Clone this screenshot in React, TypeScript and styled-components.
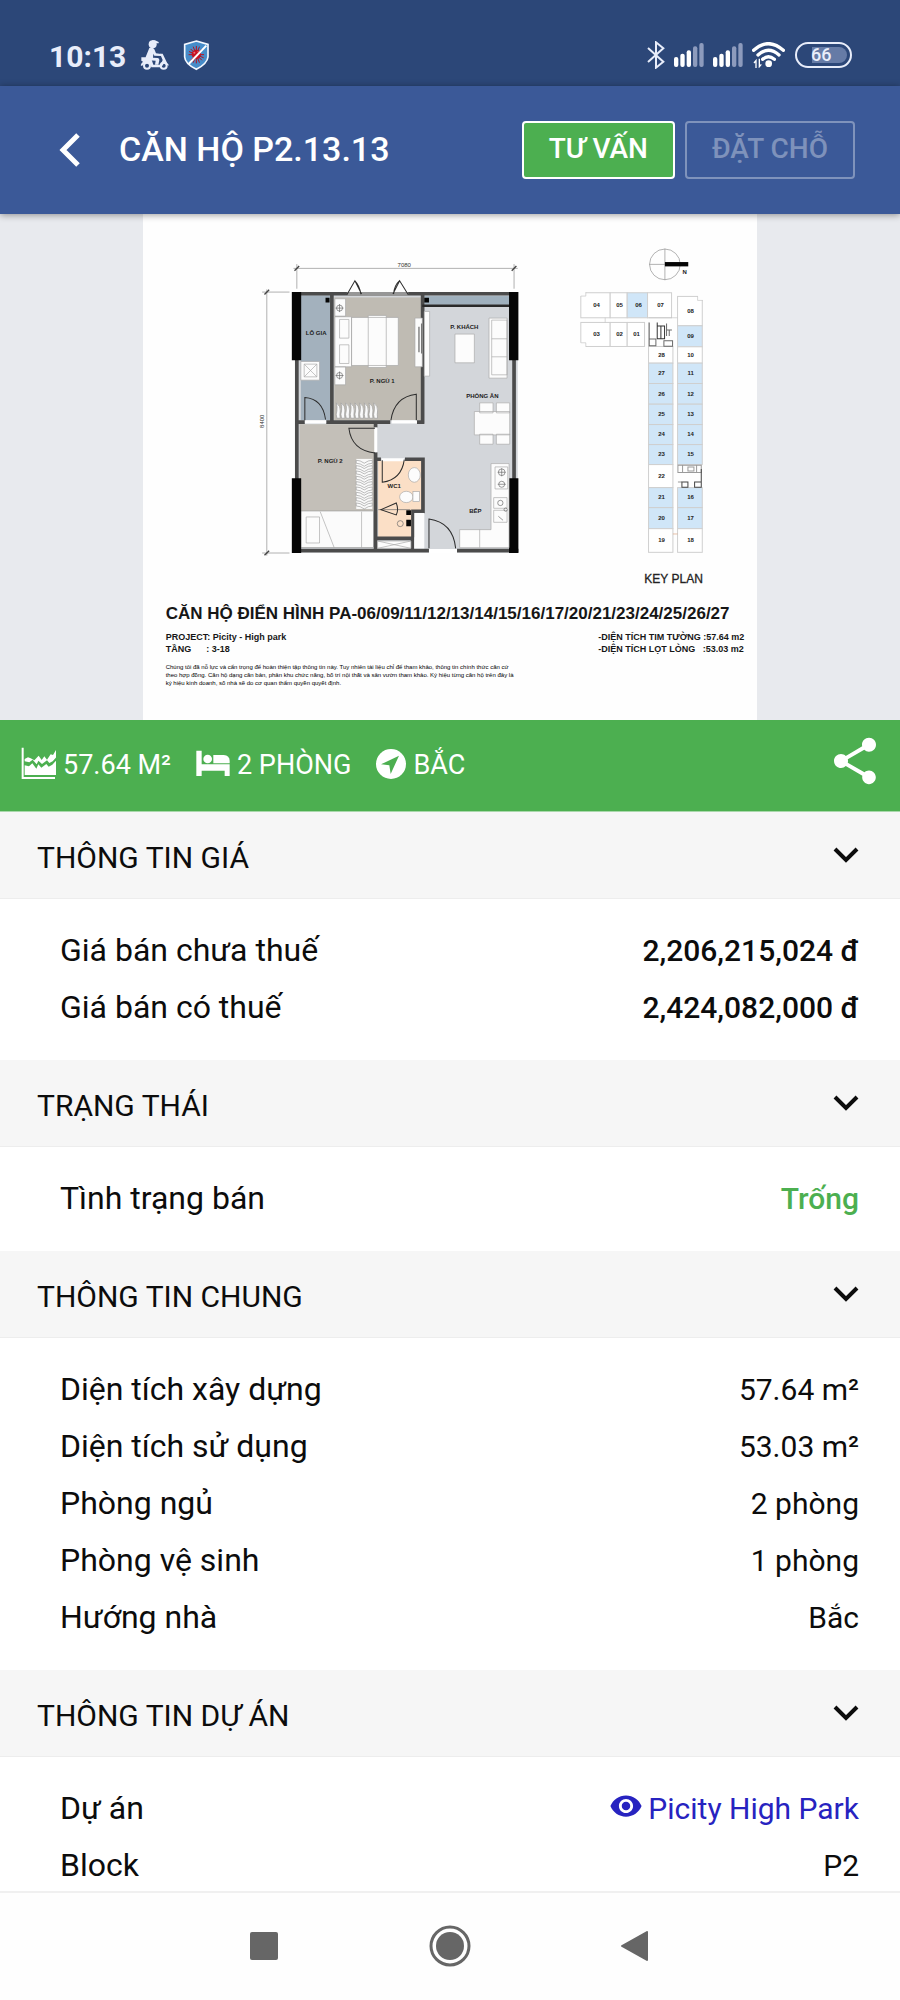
import React, { useState } from "react";
import styled, { createGlobalStyle, css } from "styled-components";
import { MdShare, MdVisibility } from "react-icons/md";

const GlobalStyle = createGlobalStyle`
  * { box-sizing: border-box; }
  body { margin: 0; background: #fff; color: #0c0c0c; font-family: Roboto, "Liberation Sans", sans-serif; }
  button { font-family: inherit; margin: 0; padding: 0; border: 0; background: none; color: inherit; cursor: pointer; }
  svg { display: block; }
`;

const App = styled.div`
  display: flex;
  flex-direction: column;
  height: 100vh;
`;

const StatusBar = styled.div`
  flex: none;
  display: flex;
  align-items: center;
  justify-content: space-between;
  height: 86px;
  padding: 24px 48px 0 49px;
  background: #2c4778;
  color: #e8edfa;
`;

const StatusGroup = styled.div<{ $gap: number }>`
  display: flex;
  align-items: center;
  gap: ${(p) => p.$gap}px;
`;

const Clock = styled.time`
  padding-top: 3px;
  font-size: 30px;
  font-weight: 700;
  line-height: 36px;
`;

const Battery = styled.div`
  display: flex;
  align-items: center;
  padding: 3px;
  width: 57px;
  height: 26px;
  border: 2px solid #e8edfa;
  border-radius: 13px;
`;

const BatteryLevel = styled.span`
  width: 100%;
  padding-left: 11px;
  border-radius: 8px;
  background: linear-gradient(90deg, transparent 12px, #667ba6 12px);
  font-size: 18px;
  font-weight: 500;
  line-height: 16px;
`;

const Header = styled.header`
  flex: none;
  position: relative;
  z-index: 1;
  display: flex;
  align-items: center;
  height: 128px;
  padding: 0 45px 0 49px;
  background: #3b5998;
  color: #fff;
  box-shadow: 0 1px 7px rgba(0, 0, 0, 0.4);
`;

const BackButton = styled.button`
  display: flex;
  align-items: center;
  justify-content: center;
  width: 42px;
  height: 48px;
`;

const Title = styled.h1`
  flex: 1;
  margin: 0 0 0 28px;
  padding-bottom: 2px;
  font-size: 34px;
  font-weight: 500;
  line-height: 40px;
  white-space: nowrap;
`;

const Actions = styled.div`
  display: flex;
  gap: 10px;
`;

const ActionButton = styled.button<{ $primary?: boolean }>`
  height: 58px;
  padding: 0 25px 4px;
  border: 2px solid rgba(255, 255, 255, 0.35);
  border-radius: 4px;
  color: rgba(255, 255, 255, 0.35);
  font-size: 28px;
  font-weight: 500;
  white-space: nowrap;
  ${(p) => p.$primary && css`
    background: #4caf50;
    border-color: #fff;
    color: #fff;
  `}
`;

const Content = styled.main`
  flex: 1;
  min-height: 0;
  overflow-y: auto;
  scrollbar-width: none;
`;

const Gallery = styled.div`
  display: flex;
  justify-content: center;
  background: #e8eaee;
`;

const Sheet = styled.figure`
  margin: 0;
  width: 68.3%;
  background: #fefefe;
  color: #161616;
  font-family: "Liberation Sans", Arial, sans-serif;
`;

const Drawing = styled.svg`
  width: 100%;
  height: auto;
`;

const Caption = styled.figcaption`
  padding: 0 13px 33px 23px;
`;

const SheetTitle = styled.div`
  font-size: 17px;
  font-weight: 700;
  line-height: 20px;
  white-space: nowrap;
`;

const SheetFacts = styled.div`
  display: flex;
  justify-content: space-between;
  margin-top: 7px;
  font-size: 9px;
  font-weight: 700;
  line-height: 12px;
  white-space: pre;
`;

const SheetNote = styled.p`
  margin: 8px 0 0;
  color: #000;
  font-size: 6px;
  line-height: 8px;
  white-space: pre;
`;

const Summary = styled.div`
  display: flex;
  align-items: flex-start;
  height: 92px;
  padding: 0 17px 0 21px;
  background: #4caf50;
  border-bottom: 1px solid #a9d8ab;
  color: #fff;
`;

const Facts = styled.div`
  flex: 1;
  display: flex;
  gap: 25px;
  padding-top: 27px;
`;

const Fact = styled.span`
  display: flex;
  gap: 7px;
  font-size: 27px;
  line-height: 36px;
  white-space: nowrap;
`;

const ShareButton = styled.button`
  margin-top: 13px;
`;

const SectionHead = styled.h2`
  margin: 0;
  border-bottom: 1px solid #ededed;
  background: #f6f6f6;
  font-size: 30px;
  font-weight: 400;
`;

const SectionToggle = styled.button`
  display: flex;
  align-items: center;
  justify-content: space-between;
  width: 100%;
  height: 86px;
  padding: 0 40px 0 37px;
  font-size: inherit;
  text-align: left;
`;

const SectionName = styled.span`
  padding-top: 6px;
  line-height: 36px;
`;

const Rows = styled.dl`
  margin: 0;
  padding: 23px 41px 24px 60px;
`;

const Row = styled.div`
  display: flex;
  align-items: baseline;
  justify-content: space-between;
  height: 57px;
  line-height: 57px;
`;

const Label = styled.dt`
  font-size: 32px;
`;

const Value = styled.dd<{ $tone?: Tone }>`
  margin: 0;
  font-size: 30px;
  font-weight: ${(p) => (p.$tone === "price" || p.$tone === "free" ? 500 : 400)};
  color: ${(p) => (p.$tone === "free" ? "#4caf50" : "inherit")};
`;

const ProjectLink = styled.a`
  color: #2723c0;
  text-decoration: none;

  svg {
    display: inline-block;
    margin-right: 5px;
    vertical-align: -4px;
  }
`;

const NavBar = styled.nav`
  flex: none;
  display: flex;
  justify-content: center;
  align-items: center;
  gap: 126px;
  height: 109px;
  padding-bottom: 1px;
  border-top: 2px solid #f0f0f0;
  background: #fefefe;
  color: #666;
`;

const NavButton = styled.button`
  display: flex;
  align-items: center;
  justify-content: center;
  width: 60px;
  height: 60px;
`;

type Tone = "price" | "free" | "link";
type Item = { label: string; value: string; tone?: Tone };

const sections: { name: string; items: Item[] }[] = [
  {
    name: "THÔNG TIN GIÁ",
    items: [
      { label: "Giá bán chưa thuế", value: "2,206,215,024 đ", tone: "price" },
      { label: "Giá bán có thuế", value: "2,424,082,000 đ", tone: "price" },
    ],
  },
  { name: "TRẠNG THÁI", items: [{ label: "Tình trạng bán", value: "Trống", tone: "free" }] },
  {
    name: "THÔNG TIN CHUNG",
    items: [
      { label: "Diện tích xây dựng", value: "57.64 m²" },
      { label: "Diện tích sử dụng", value: "53.03 m²" },
      { label: "Phòng ngủ", value: "2 phòng" },
      { label: "Phòng vệ sinh", value: "1 phòng" },
      { label: "Hướng nhà", value: "Bắc" },
    ],
  },
  {
    name: "THÔNG TIN DỰ ÁN",
    items: [
      { label: "Dự án", value: "Picity High Park", tone: "link" },
      { label: "Block", value: "P2" },
    ],
  },
];

const ScooterIcon = () => (
  <svg width="29" height="30" viewBox="0 0 87 90" fill="currentColor" aria-hidden="true">
    <circle cx="38" cy="13" r="12" />
    <path d="M36 1h9l11 5v4H40z" />
    <path d="M28 24q10-4 15 4l5 12 16 2-1 6-20-1-3-6-1 12 14 1q6 1 5 7l-3 13H45l2-12-23-1q-9-1-7-10z" />
    <path d="M4 52h28l4 10 4 12h22l6-14-8-19h8l13 27 7 9-7-2-9-5-8 12H34q-2-13-14-12-10 0-14 8l-4-2q2-8 7-11l-5-3z" />
    <g fill="none" stroke="currentColor" strokeWidth="6">
      <circle cx="21" cy="77" r="9" />
      <circle cx="71" cy="77" r="9" />
    </g>
  </svg>
);

const ShieldIcon = () => (
  <svg width="27" height="31" viewBox="0 0 81 93" aria-hidden="true">
    <path d="M40 3l35 10v38q-2 20-35 37Q6 71 5 51V13z" fill="#468cc9" stroke="#f4f8ff" strokeWidth="5" />
    <g stroke="#b3121f" strokeWidth="3" strokeLinecap="round">
      <path d="M40 19v50M18 44h44M24 28l32 32M56 28L24 60M31 21l18 46M19 35l42 18M49 21L31 67" />
    </g>
    <circle cx="40" cy="43" r="14" fill="#c41323" />
    <circle cx="34" cy="38" r="3" fill="#eb6a73" />
    <circle cx="45" cy="35" r="2" fill="#eb6a73" />
    <path d="M17 72l53-55" stroke="#fff" strokeWidth="6" />
  </svg>
);

const BluetoothIcon = () => (
  <svg width="18" height="28" viewBox="0 0 54 84" fill="none" stroke="currentColor" strokeWidth="6" aria-hidden="true">
    <path d="M3 21l46 41-22 18V4l22 18L3 63" />
  </svg>
);

const SignalIcon = () => (
  <svg width="30" height="24" viewBox="0 0 90 72" aria-hidden="true">
    {[42, 32, 22, 10, 0].map((top, i) => (
      <rect key={top} x={i * 19} y={top} width="13" height={72 - top} rx="6" fill={i < 3 ? "#fff" : "#8d9bbd"} />
    ))}
  </svg>
);

const WifiIcon = () => (
  <svg width="34" height="26" viewBox="0 0 102 78" fill="none" stroke="#fff" aria-hidden="true">
    <g strokeWidth="10" strokeLinecap="round">
      <path d="M5 25q44-40 89 0" />
      <path d="M18 39q31-28 63 0" />
      <path d="M32 52q17-15 35 0" />
    </g>
    <circle cx="50" cy="65" r="10" fill="#fff" stroke="none" />
    <path d="M12 78V56l-6 7M22 50v24l6-7" strokeWidth="4" />
  </svg>
);

const AreaChartIcon = () => (
  <svg width="35" height="33" viewBox="0 0 105 99" fill="currentColor" aria-hidden="true">
    <path d="M2 2h6v88h94v6H2z" />
    <path d="M11 36l10-5 8 3 11 6 13-14 9 13 8-11 8 10 11-16 7 2 9-15 1 1v20l-11 13-10 5-7-8-15 11-11-10-5 11-12-14-10 8-14-3z" />
    <path d="M11 55l13 3 10-9 12 16 6-13 9 10 15-11 7 8 11-6 12-13v44H11z" />
  </svg>
);

const BedIcon = () => (
  <svg width="34" height="30" viewBox="0 -9 102 90" fill="currentColor" aria-hidden="true">
    <path d="M1 2h16v41h84v35H86V62H17v16H1z" />
    <circle cx="35" cy="27" r="13" />
    <path d="M52 15h31q18 2 18 18v7H52z" />
  </svg>
);

const NavigateIcon = () => (
  <svg width="30" height="32" viewBox="0 -6 90 96" aria-hidden="true">
    <circle cx="45" cy="45" r="45" fill="#fff" />
    <path d="M69 20L44 75l-4-26-25-3z" fill="#4caf50" />
  </svg>
);

const DownIcon = () => (
  <svg width="28" height="18" viewBox="0 0 28 18" fill="none" stroke="#0c0c0c" strokeWidth="4" aria-hidden="true">
    <path d="M3 3l11 11L25 3" />
  </svg>
);

const wardrobe = [0, 1, 2, 3, 4, 5, 6, 7, 8];

const ApartmentPlan = () => (
  <g transform="translate(107 36) scale(.3333)">
    <g fill="none" stroke="#8b8b8b" strokeWidth="2">
      <path d="M130 55h672M140 42v74M791 42v74M50 118v798M36 126h82M36 908h82" />
      <path d="M133 62l14-14M784 62l14-14M43 133l14-14M43 915l14-14" stroke="#444" strokeWidth="4" />
    </g>
    <rect x="134" y="126" width="668" height="780" fill="#d3d6da" />
    <rect x="152" y="136" width="88" height="374" fill="#a3b1bd" />
    <rect x="252" y="142" width="260" height="368" fill="#bfbbb3" />
    <rect x="148" y="522" width="226" height="260" fill="#c3bfb8" />
    <rect x="152" y="782" width="218" height="110" fill="#fbfbfb" stroke="#999" strokeWidth="2" />
    <rect x="384" y="632" width="130" height="228" fill="#fbdfc6" />
    <rect x="522" y="138" width="256" height="26" fill="#9fb0bd" />

    <g fill="none" stroke="#4b4b4b" strokeWidth="11">
      <path d="M134 131h650M134 901h402M620 901h184M140 126v780M791 126v780" />
      <path d="M245 130v386M517 130v390M140 516h24M228 516h192M500 516h22" />
      <path d="M376 520v12M376 606v290M380 627h12M464 627h54v156h-30v78M380 864h112M486 860v36" />
      <path d="M516 167h262" stroke="#292929" strokeWidth="8" />
    </g>
    <path d="M290 126h184v12H290z" fill="#969696" />
    <path d="M492 788h30v106h-30z" fill="#fcfcfc" />
    <g fill="#050505">
      <path d="M125 126h28v204h-28zM776 126h28v204h-28zM125 684h28v224h-28zM776 684h28v224h-28z" />
      <path d="M226 143h12v14h-12zM522 143h14v14h-14zM468 780h14v14h-14zM468 808h14v20h-14z" />
    </g>
    <g fill="#fff">
      <path d="M164 510h64v10h-64zM424 510h76v10h-76zM372 532h9v74h-9zM394 624h68v9h-68zM536 896h84v12h-84z" />
    </g>

    <g fill="#fcfcfc" stroke="#a8a8a8" strokeWidth="2">
      <path d="M254 146h32v52h-32zM254 350h32v54h-32zM254 200h50v150h-50zM304 202h140v144H304zM354 196h54v156h-54z" />
      <path d="M268 208h28v56h-28zM268 284h28v56h-28zM494 204h22v146h-22zM522 184h16v194h-16z" />
      <path d="M152 334h56v56h-56zM162 342h38v38h-38zM162 342l38 38M200 342l-38 38" />
      <path d="M716 204h54v180h-54zM724 210h46v164h-46zM724 266h46M724 320h46M614 252h58v86h-58z" />
      <path d="M688 458h40v30h-40zM738 458h40v30h-40zM688 552h40v30h-40zM738 552h40v30h-40zM672 484h106v70H672z" />
      <path d="M722 640h54v252H628v-54h94zM734 650h38v66h-38zM730 742h40v32h-40zM730 780h40v36h-40zM688 838v54" />
      <path d="M168 800h40v78h-40zM210 784l42 108M334 784v108M382 872h100v22H382zM382 872l100 22M482 872l-100 22" />
      <ellipse cx="492" cy="674" rx="18" ry="22" />
      <ellipse cx="468" cy="740" rx="20" ry="17" />
      <rect x="488" y="724" width="20" height="30" />
    </g>
    <g fill="none" stroke="#666" strokeWidth="2">
      <circle cx="268" cy="174" r="9" />
      <circle cx="268" cy="376" r="9" />
      <circle cx="754" cy="666" r="10" />
      <circle cx="754" cy="702" r="9" />
      <circle cx="450" cy="820" r="9" />
      <circle cx="750" cy="758" r="8" />
      <circle cx="766" cy="778" r="5" />
      <path d="M744 798l14 12M256 174h24M268 162v24M256 376h24M268 364v24M742 666h24M754 654v24M742 702h24M384 778h96" />
      <path d="M506 230v76M514 220v90" stroke="#777" strokeWidth="4" />
    </g>
    <g fill="none" stroke="#2c2c2c" strokeWidth="3">
      <path d="M290 134l24-42 20 40M314 92q14 14 18 40M474 134l-26-42-20 40M448 92q-16 14-18 40" />
      <path d="M164 510v-68q54 4 62 66M498 510v-78q-66 8-76 78M374 534h-78q8 66 78 74M396 630v66q58-8 66-68M536 894v-88q72 10 80 88M392 778l46-20q8 20 0 36z" />
    </g>
    <g fill="#fafafa" stroke="#9c9c9c" strokeWidth="2">
      {wardrobe.map((i) => (
        <path key={i} d={`M${258 + i * 14} 458q14 10 12 24-2 12 0 22h-10q-4-12 0-22 2-12-2-24z`} />
      ))}
      <rect x="318" y="626" width="48" height="150" stroke="none" />
      {wardrobe.map((i) => (
        <path key={i} d={`M318 ${630 + i * 16}q12 0 24 9 12-9 24-9v9q-12 0-24 9-12-9-24-9z`} />
      ))}
    </g>
  </g>
);

type Unit = [name: string, x: number, y: number, w: number, h: number, own?: boolean];

const units: Unit[] = [
  ["04", 61, 188, 88, 75], ["05", 149, 188, 51, 75], ["06", 200, 188, 61, 75, true], ["07", 261, 188, 72, 75],
  ["03", 61, 277, 88, 72], ["02", 149, 277, 51, 72], ["01", 200, 277, 52, 72],
  ["28", 264, 349, 73, 50], ["27", 264, 399, 73, 61, true], ["26", 264, 460, 73, 62, true], ["25", 264, 522, 73, 61, true],
  ["24", 264, 583, 73, 60, true], ["23", 264, 643, 73, 60, true], ["22", 264, 703, 73, 69], ["21", 264, 772, 73, 60, true],
  ["20", 264, 832, 73, 63, true], ["19", 264, 895, 73, 71],
  ["08", 351, 199, 74, 88], ["09", 351, 287, 74, 63, true], ["10", 351, 350, 74, 49], ["11", 351, 399, 74, 61, true],
  ["12", 351, 460, 74, 62, true], ["13", 351, 522, 74, 61, true], ["14", 351, 583, 74, 60, true],
  ["15", 351, 643, 74, 60, true], ["16", 351, 772, 74, 60, true], ["17", 351, 832, 74, 63, true], ["18", 351, 895, 74, 71],
];

const KeyPlan = () => (
  <>
    <g transform="translate(417 16) scale(.3333)">
      <g stroke="#cfcfcf" strokeWidth="3">
        {units.map(([name, x, y, w, h, own]) => (
          <rect key={name} x={x} y={y} width={w} height={h} fill={own ? "#d0e6f8" : "#fff"} />
        ))}
      </g>
      <g fill="#fefefe">
        <path d="M56 180h20v18H56zM56 338h20v16H56zM412 194h18v16h-18z" />
      </g>
      <g fill="none" stroke="#c4c4c4" strokeWidth="2">
        <path d="M76 186v12H61M61 338h15v12M411 199v12h15M134 263v14M264 263h87M264 277v72" />
        <path d="M337 911h14" stroke="#dba27c" />
        <circle cx="313" cy="103" r="46" stroke="#8c8c8c" />
        <path d="M266 103h94M313 56v94" stroke="#8c8c8c" />
      </g>
      <path d="M313 96h70v13h-70z" fill="#050505" />
      <g fill="none" stroke="#6a6a6a" strokeWidth="3">
        <path d="M266 277v70h20v-20h-20M318 280v38M318 300h16M326 300v18M310 332h26v16h-26z" />
        <path d="M290 288h22v38h-22zM290 277v11M301 288v38" stroke="#333" />
        <path d="M352 705h70v22h-70zM366 705v22M382 710h18v12h-18zM408 705v22M352 755h12" stroke="#9a9a9a" />
        <path d="M422 716v55h-20v-16h20M364 755h18v16h-18z" stroke="#444" />
      </g>
    </g>
    <g fontSize="6" fontWeight="700" textAnchor="middle" fill="#222">
      {units.map(([name, x, y, w, h]) => (
        <text key={name} x={Math.round(417 + (x + w / 2 + 3) / 3)} y={Math.round(18 + (y + h / 2) / 3)}>
          {name}
        </text>
      ))}
      <text x="541" y="60">N</text>
    </g>
    <text x="530" y="369" fontSize="12" textAnchor="middle" fill="#222" stroke="#222" strokeWidth=".3">KEY PLAN</text>
  </>
);

const rooms: [string, number, number][] = [
  ["LÔ GIA", 173, 121],
  ["P. NGỦ 1", 239, 169],
  ["P. KHÁCH", 321, 115],
  ["PHÒNG ĂN", 339, 184],
  ["P. NGỦ 2", 187, 249],
  ["WC1", 251, 274],
  ["BẾP", 332, 299],
];

const FloorPlan = () => (
  <Drawing viewBox="0 0 614 390" role="img" aria-label="Mặt bằng căn hộ">
    <ApartmentPlan />
    <g fontSize="6" fontWeight="700" textAnchor="middle" fill="#1c1c1c">
      {rooms.map(([name, x, y]) => (
        <text key={name} x={x} y={y}>{name}</text>
      ))}
    </g>
    <g fontSize="6" textAnchor="middle" fill="#333">
      <text x="261" y="53">7080</text>
      <text transform="translate(121 207) rotate(-90)">8400</text>
    </g>
    <KeyPlan />
  </Drawing>
);

const note = [
  "Chúng tôi đã nỗ lực và cẩn trọng để hoàn thiện tập thông tin này. Tuy nhiên tài liệu chỉ để tham khảo, thông tin chính thức căn cứ",
  "theo hợp đồng. Căn hộ dạng căn bản, phân khu chức năng, bố trí nội thất và sân vườn tham khảo. Ký hiệu từng căn hộ trên đây là",
  "ký hiệu kinh doanh, số nhà sẽ do cơ quan thẩm quyền quyết định.",
].join("\n");

const Section = ({ name, items }: { name: string; items: Item[] }) => {
  const [open, setOpen] = useState(true);
  return (
    <section>
      <SectionHead>
        <SectionToggle type="button" aria-expanded={open} onClick={() => setOpen(!open)}>
          <SectionName>{name}</SectionName>
          <DownIcon />
        </SectionToggle>
      </SectionHead>
      {open && (
        <Rows>
          {items.map(({ label, value, tone }) => (
            <Row key={label}>
              <Label>{label}</Label>
              <Value $tone={tone}>
                {tone === "link" ? (
                  <ProjectLink href="#project">
                    <MdVisibility size={34} aria-hidden="true" />
                    {value}
                  </ProjectLink>
                ) : (
                  value
                )}
              </Value>
            </Row>
          ))}
        </Rows>
      )}
    </section>
  );
};

export default function ApartmentScreen() {
  return (
    <App>
      <GlobalStyle />
      <StatusBar>
        <StatusGroup $gap={14}>
          <Clock>10:13</Clock>
          <ScooterIcon />
          <ShieldIcon />
        </StatusGroup>
        <StatusGroup $gap={9}>
          <BluetoothIcon />
          <SignalIcon />
          <SignalIcon />
          <WifiIcon />
          <Battery>
            <BatteryLevel>66</BatteryLevel>
          </Battery>
        </StatusGroup>
      </StatusBar>

      <Header>
        <BackButton type="button" aria-label="Quay lại">
          <svg width="22" height="36" viewBox="0 0 22 36" fill="none" stroke="#fff" strokeWidth="5" aria-hidden="true">
            <path d="M19 3L4 18l15 15" />
          </svg>
        </BackButton>
        <Title>CĂN HỘ P2.13.13</Title>
        <Actions>
          <ActionButton type="button" $primary>TƯ VẤN</ActionButton>
          <ActionButton type="button" disabled>ĐẶT CHỖ</ActionButton>
        </Actions>
      </Header>

      <Content>
        <Gallery>
          <Sheet>
            <FloorPlan />
            <Caption>
              <SheetTitle>CĂN HỘ ĐIỂN HÌNH PA-06/09/11/12/13/14/15/16/17/20/21/23/24/25/26/27</SheetTitle>
              <SheetFacts>
                <div>{"PROJECT: Picity - High park\nTẦNG      : 3-18"}</div>
                <div>{"-DIỆN TÍCH TIM TƯỜNG :57.64 m2\n-DIỆN TÍCH LỌT LÒNG   :53.03 m2"}</div>
              </SheetFacts>
              <SheetNote>{note}</SheetNote>
            </Caption>
          </Sheet>
        </Gallery>

        <Summary>
          <Facts>
            <Fact><AreaChartIcon />57.64 M²</Fact>
            <Fact><BedIcon />2 PHÒNG</Fact>
            <Fact><NavigateIcon />BẮC</Fact>
          </Facts>
          <ShareButton type="button" aria-label="Chia sẻ">
            <MdShare size={56} />
          </ShareButton>
        </Summary>

        {sections.map((section) => (
          <Section key={section.name} {...section} />
        ))}
      </Content>

      <NavBar aria-label="Điều hướng hệ thống">
        <NavButton type="button" aria-label="Gần đây">
          <svg width="28" height="28" viewBox="0 0 28 28" aria-hidden="true">
            <rect width="28" height="28" rx="2" fill="currentColor" />
          </svg>
        </NavButton>
        <NavButton type="button" aria-label="Trang chủ">
          <svg width="42" height="42" viewBox="0 0 42 42" aria-hidden="true">
            <circle cx="21" cy="21" r="19" fill="none" stroke="currentColor" strokeWidth="3" />
            <circle cx="21" cy="21" r="14" fill="currentColor" />
          </svg>
        </NavButton>
        <NavButton type="button" aria-label="Trở về">
          <svg width="30" height="30" viewBox="0 0 30 30" aria-hidden="true">
            <path d="M26 1v28L1 15z" fill="currentColor" stroke="currentColor" strokeLinejoin="round" strokeWidth="2" />
          </svg>
        </NavButton>
      </NavBar>
    </App>
  );
}
